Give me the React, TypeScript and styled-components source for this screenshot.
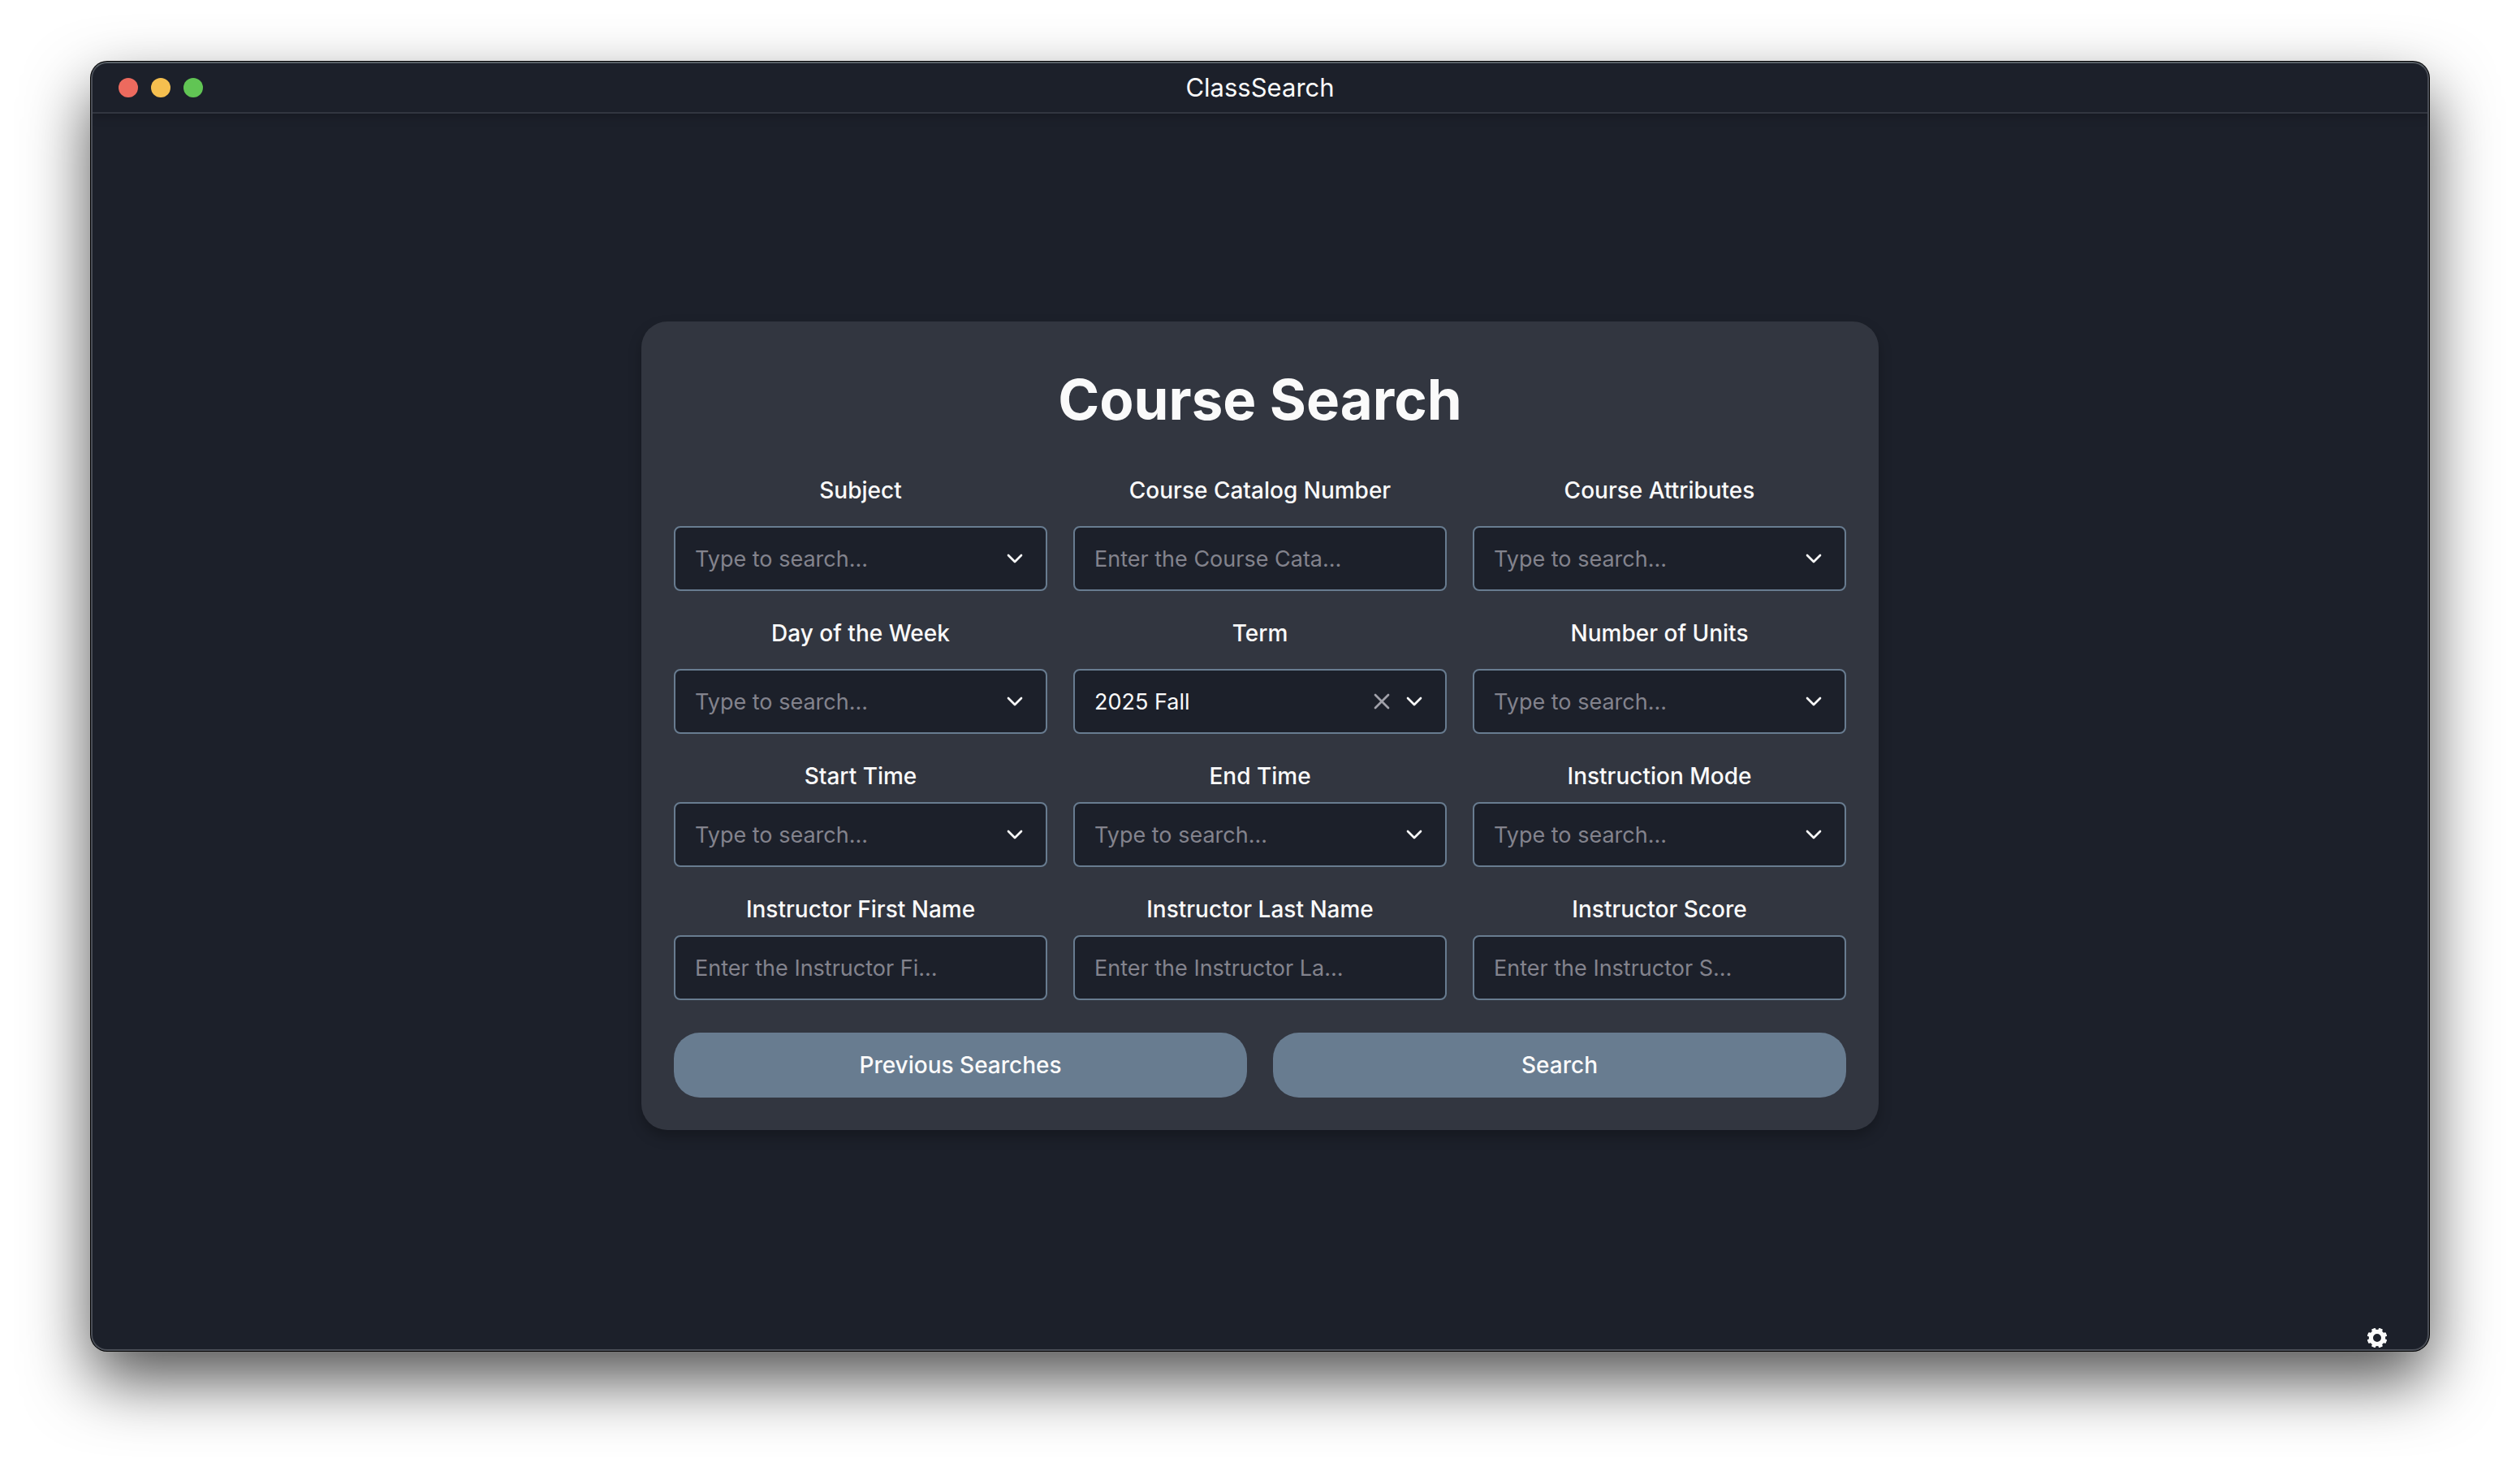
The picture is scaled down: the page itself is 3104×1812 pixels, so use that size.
import React, { useState } from 'react';
import styled, { createGlobalStyle } from 'styled-components';
import { ChevronDown, X } from 'lucide-react';

const color = {
  base: '#1c202a',
  card: '#323640',
  accent: '#687c90',
  text: '#fafafa',
  muted: '#83838d',
  clear: '#a1a1aa',
};

const GlobalStyle = createGlobalStyle`
  *, *::before, *::after { box-sizing: border-box; }
  body {
    margin: 0;
    background: #ffffff;
    font-family: Inter, "Liberation Sans", sans-serif;
    color: ${color.text};
    -webkit-font-smoothing: antialiased;
  }
`;

const Desktop = styled.div`
  min-height: 100vh;
  padding: 76px 112px 148px;
  display: flex;
`;

const Window = styled.div`
  position: relative;
  flex: 1;
  display: flex;
  flex-direction: column;
  background: ${color.base};
  border-radius: 20px;
  overflow: hidden;
  box-shadow: 0 0 0 1px #000000, 0 36px 80px 0 rgba(0, 0, 0, 0.68);

  &::after {
    content: '';
    position: absolute;
    inset: 0;
    border-radius: 20px;
    border: 2px solid #4a4e57;
    border-top-color: #596066;
    pointer-events: none;
  }
`;

const TitleBar = styled.header`
  height: 64px;
  padding: 2px 34px 0;
  display: grid;
  grid-template-columns: 1fr auto 1fr;
  align-items: center;
  border-bottom: 2px solid ${color.card};
  box-shadow: 0 2px 12px rgba(0, 0, 0, 0.25);
`;

const Lights = styled.div`
  display: flex;
  gap: 16px;
`;

const Light = styled.button<{ $fill: string }>`
  width: 24px;
  height: 24px;
  padding: 0;
  border: 0;
  border-radius: 50%;
  background: ${(p) => p.$fill};
`;

const AppName = styled.span`
  font-size: 31px;
  line-height: 40px;
`;

const Main = styled.main`
  flex: 1;
  display: flex;
  align-items: center;
  justify-content: center;
  padding: 0 32px 16px;
`;

const Card = styled.form`
  width: 100%;
  max-width: 1524px;
  padding: 40px;
  border-radius: 32px;
  background: ${color.card};
  box-shadow: 0 8px 16px rgba(0, 0, 0, 0.25);
`;

const Heading = styled.h1`
  margin: 0 0 36px;
  font-size: 69px;
  line-height: 112px;
  font-weight: 700;
  text-align: center;
`;

const Fields = styled.div`
  display: grid;
  grid-template-columns: repeat(3, minmax(0, 1fr));
  gap: 32px;
`;

const Field = styled.div<{ $gap: number }>`
  display: flex;
  flex-direction: column;
  gap: ${(p) => p.$gap}px;
`;

const Label = styled.label`
  font-size: 28px;
  line-height: 40px;
  font-weight: 500;
  text-align: center;
`;

const Control = styled.div`
  height: 80px;
  padding: 0 22px 0 24px;
  display: flex;
  align-items: center;
  gap: 8px;
  border: 2px solid ${color.accent};
  border-radius: 8px;
  background: ${color.base};
`;

const TextInput = styled.input`
  flex: 1;
  min-width: 0;
  height: 40px;
  padding: 0;
  border: 0;
  outline: 0;
  background: transparent;
  font: inherit;
  font-size: 27px;
  color: ${color.text};

  &::placeholder {
    color: ${color.muted};
    opacity: 1;
  }
`;

const IconButton = styled.button`
  display: flex;
  padding: 0;
  border: 0;
  background: none;
  color: ${color.text};
`;

const ClearButton = styled(IconButton)`
  color: ${color.clear};
`;

const Actions = styled.div`
  margin-top: 40px;
  display: grid;
  grid-template-columns: 1fr 1fr;
  gap: 32px;
`;

const ActionButton = styled.button`
  height: 80px;
  border: 0;
  border-radius: 32px;
  background: ${color.accent};
  font: inherit;
  font-size: 28px;
  font-weight: 500;
  color: ${color.text};
`;

const SettingsButton = styled(IconButton)`
  position: absolute;
  right: 52px;
  bottom: 4px;
`;

type FieldSpec = {
  id: string;
  label: string;
  kind: 'combo' | 'text';
  placeholder: string;
  value?: string;
};

const search = 'Type to search...';

const fields: FieldSpec[] = [
  { id: 'subject', label: 'Subject', kind: 'combo', placeholder: search },
  { id: 'catalog', label: 'Course Catalog Number', kind: 'text', placeholder: 'Enter the Course Cata…' },
  { id: 'attributes', label: 'Course Attributes', kind: 'combo', placeholder: search },
  { id: 'day', label: 'Day of the Week', kind: 'combo', placeholder: search },
  { id: 'term', label: 'Term', kind: 'combo', placeholder: search, value: '2025 Fall' },
  { id: 'units', label: 'Number of Units', kind: 'combo', placeholder: search },
  { id: 'start', label: 'Start Time', kind: 'combo', placeholder: search },
  { id: 'end', label: 'End Time', kind: 'combo', placeholder: search },
  { id: 'mode', label: 'Instruction Mode', kind: 'combo', placeholder: search },
  { id: 'first', label: 'Instructor First Name', kind: 'text', placeholder: 'Enter the Instructor Fi…' },
  { id: 'last', label: 'Instructor Last Name', kind: 'text', placeholder: 'Enter the Instructor La…' },
  { id: 'score', label: 'Instructor Score', kind: 'text', placeholder: 'Enter the Instructor S…' },
];

function FormField({ spec, gap }: { spec: FieldSpec; gap: number }) {
  const [value, setValue] = useState(spec.value ?? '');
  const combo = spec.kind === 'combo';
  return (
    <Field $gap={gap}>
      <Label htmlFor={spec.id}>{spec.label}</Label>
      <Control>
        <TextInput
          id={spec.id}
          role={combo ? 'combobox' : undefined}
          aria-expanded={combo ? false : undefined}
          placeholder={spec.placeholder}
          value={value}
          onChange={(e) => setValue(e.target.value)}
        />
        {combo && value !== '' && (
          <ClearButton type="button" aria-label={`Clear ${spec.label}`} onClick={() => setValue('')}>
            <X size={32} strokeWidth={2} />
          </ClearButton>
        )}
        {combo && (
          <IconButton type="button" aria-label={`Open ${spec.label}`}>
            <ChevronDown size={32} strokeWidth={2} />
          </IconButton>
        )}
      </Control>
    </Field>
  );
}

const teeth = [22.5, 67.5, 112.5, 157.5, 202.5, 247.5, 292.5, 337.5];

function Gear() {
  return (
    <svg width="24" height="24" viewBox="0 0 24 24" aria-hidden="true">
      <circle cx="12" cy="12" r="7.6" fill="none" stroke="currentColor" strokeWidth="5.2" />
      {teeth.map((a) => (
        <rect key={a} x="9.4" y="-0.3" width="5.2" height="5" rx="1" fill="currentColor" transform={`rotate(${a} 12 12)`} />
      ))}
    </svg>
  );
}

export default function App() {
  return (
    <>
      <GlobalStyle />
      <Desktop>
        <Window>
          <TitleBar>
            <Lights>
              <Light type="button" aria-label="Close" $fill="#ed6a5e" />
              <Light type="button" aria-label="Minimize" $fill="#f5bf4f" />
              <Light type="button" aria-label="Zoom" $fill="#61c554" />
            </Lights>
            <AppName>ClassSearch</AppName>
          </TitleBar>
          <Main>
            <Card onSubmit={(e) => e.preventDefault()}>
              <Heading>Course Search</Heading>
              <Fields>
                {fields.map((spec, i) => (
                  <FormField key={spec.id} spec={spec} gap={i < 6 ? 24 : 12} />
                ))}
              </Fields>
              <Actions>
                <ActionButton type="button">Previous Searches</ActionButton>
                <ActionButton type="submit">Search</ActionButton>
              </Actions>
            </Card>
          </Main>
          <SettingsButton type="button" aria-label="Settings">
            <Gear />
          </SettingsButton>
        </Window>
      </Desktop>
    </>
  );
}
